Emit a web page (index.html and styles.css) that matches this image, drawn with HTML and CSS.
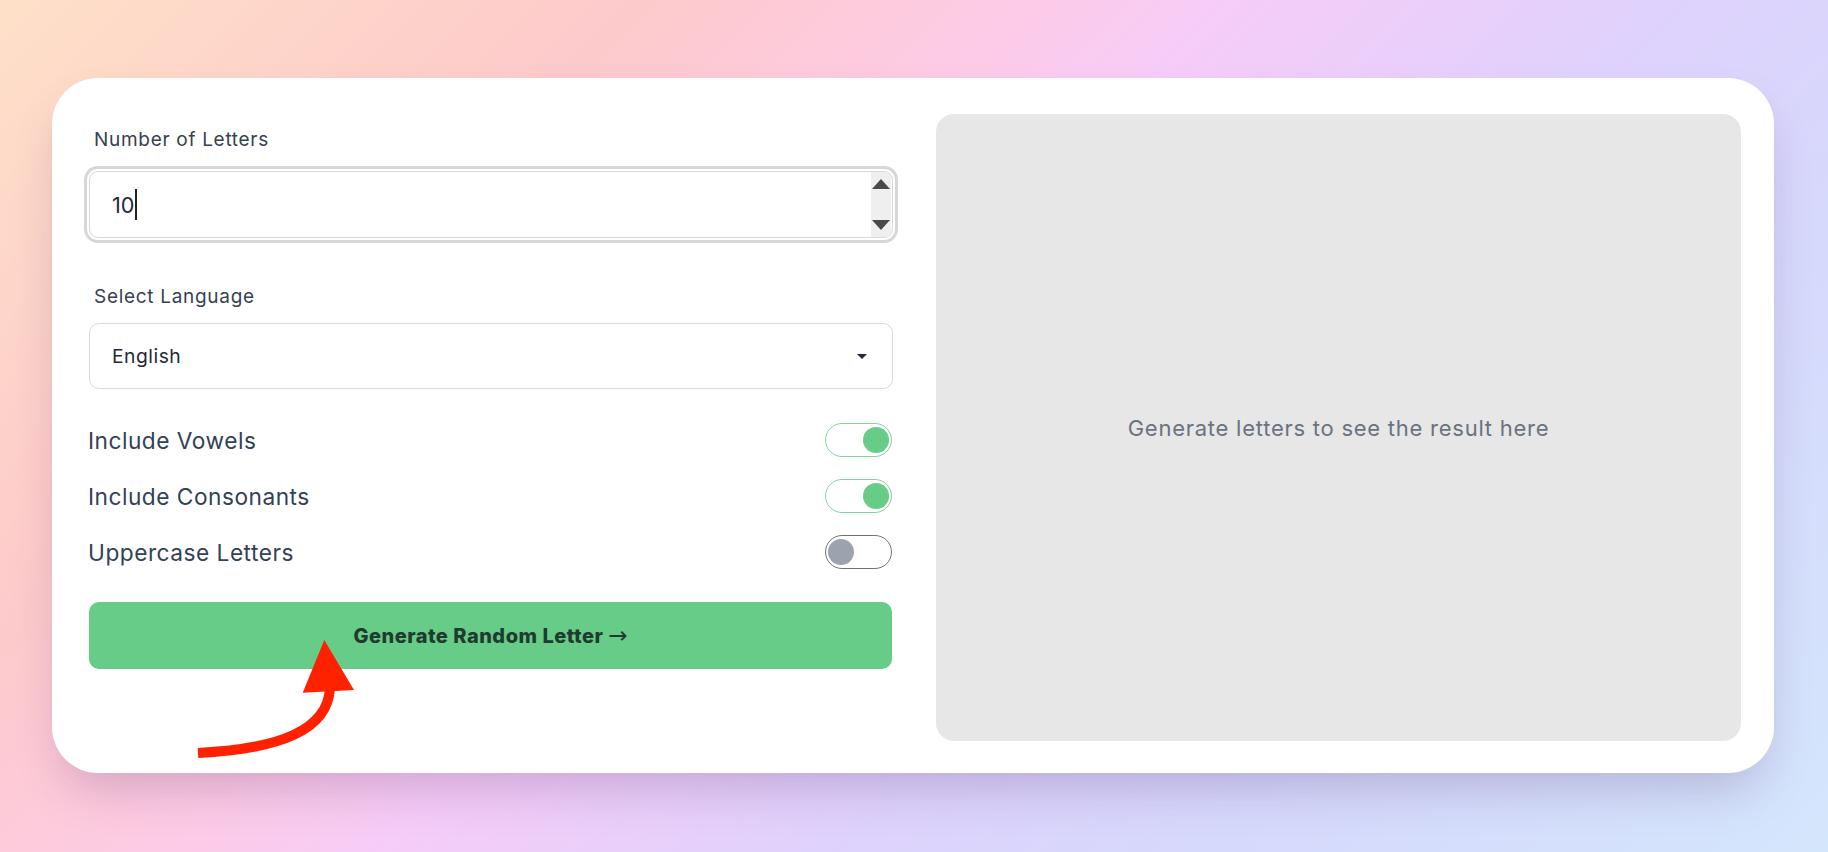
FILE: index.html
```html
<!DOCTYPE html>
<html lang="en">
<head>
<meta charset="utf-8">
<title>Random Letter Generator</title>
<link rel="stylesheet" href="styles.css">
</head>
<body>
<div class="card">
  <div class="controls">
    <div class="field-label first">Number of Letters</div>
    <div class="number-input">
      <span class="value">10</span><span class="caret"></span>
      <div class="spinner"><span class="tri-up"></span><span class="tri-down"></span></div>
    </div>
    <div class="field-label second">Select Language</div>
    <div class="select"><span class="select-value">English</span><span class="select-arrow"></span></div>
    <div class="toggles">
      <div class="toggle-row"><span class="toggle-label">Include Vowels</span><span class="switch on"><span class="knob"></span></span></div>
      <div class="toggle-row"><span class="toggle-label">Include Consonants</span><span class="switch on"><span class="knob"></span></span></div>
      <div class="toggle-row"><span class="toggle-label">Uppercase Letters</span><span class="switch off"><span class="knob"></span></span></div>
    </div>
    <button class="generate">Generate Random Letter <span class="btn-arrow">→</span></button>
  </div>
  <div class="result"><p class="result-text">Generate letters to see the result here</p></div>
</div>
<svg class="annotation" width="1828" height="852" viewBox="0 0 1828 852">
  <path d="M198 753 C 280 749, 328 730, 330 688" fill="none" stroke="#ff2200" stroke-width="10"/>
  <polygon points="324.3,640 302.7,692.7 354,690" fill="#ff2200"/>
</svg>
</body>
</html>
```
FILE: styles.css
```css
html, body {
  margin: 0;
  height: 852px;
}
body {
  box-sizing: border-box;
  padding: 78px 0 0 52px;
  overflow: hidden;
  font-family: Inter, "Noto Sans", sans-serif;
  background: linear-gradient(135deg, #fee0c8 0%, #fdcacb 24%, #fdcbe6 38%, #f6ccf8 46%, #dfd2fc 62%, #d6d8fc 76%, #d4e6fc 100%);
}
.card {
  width: 1722px;
  height: 695px;
  box-sizing: border-box;
  padding: 36px 33px 32px 36px;
  background: #fff;
  border-radius: 46px;
  display: grid;
  grid-template-columns: 805px 805px;
  column-gap: 43px;
  box-shadow: 0 25px 50px -12px rgba(60, 20, 80, 0.22);
}
.controls {
  display: flex;
  flex-direction: column;
  padding-top: 15px;
}
.field-label {
  font-size: 19px;
  line-height: 22px;
  letter-spacing: 0.7px;
  color: #374151;
  padding-left: 6px;
}
.field-label.first { margin-bottom: 20px; }
.field-label.second { margin-bottom: 15px; }
.number-input {
  height: 67px;
  box-sizing: border-box;
  border: 1.5px solid #d9d9d9;
  border-radius: 9px;
  box-shadow: 0 0 0 2px #fff, 0 0 0 5px #d7d7db;
  display: flex;
  align-items: center;
  padding-left: 22px;
  margin: 0 0 48px 1px;
  overflow: hidden;
}
.value {
  font-size: 21.6px;
  color: #1f2937;
}
.caret {
  width: 1.5px;
  height: 31px;
  background: #222;
  margin-left: 1px;
}
.spinner {
  margin-left: auto;
  margin-right: 1px;
  align-self: stretch;
  width: 20px;
  background: #efefef;
  display: flex;
  flex-direction: column;
  justify-content: space-between;
  align-items: center;
  padding: 7px 0 7px;
  box-sizing: border-box;
}
.tri-up {
  width: 0;
  height: 0;
  border-left: 9.5px solid transparent;
  border-right: 9.5px solid transparent;
  border-bottom: 10px solid #4a4a4a;
}
.tri-down {
  width: 0;
  height: 0;
  border-left: 9.5px solid transparent;
  border-right: 9.5px solid transparent;
  border-top: 10px solid #4a4a4a;
}
.select {
  height: 66px;
  box-sizing: border-box;
  border: 1.5px solid #dadada;
  border-radius: 10px;
  padding: 0 25px 0 22px;
  margin-left: 1px;
  display: flex;
  align-items: center;
  justify-content: space-between;
}
.select-value {
  font-size: 19.3px;
  letter-spacing: 0.5px;
  color: #1f2937;
}
.select-arrow {
  width: 0;
  height: 0;
  border-left: 5px solid transparent;
  border-right: 5px solid transparent;
  border-top: 5.5px solid #1f2937;
}
.toggles {
  margin-top: 34px;
  display: flex;
  flex-direction: column;
  gap: 22px;
}
.toggle-row {
  display: flex;
  align-items: center;
  justify-content: space-between;
  height: 34px;
}
.toggle-label {
  font-size: 22.7px;
  letter-spacing: 0.5px;
  color: #334155;
}
.switch {
  width: 67px;
  height: 34px;
  box-sizing: border-box;
  border-radius: 17px;
  display: flex;
  align-items: center;
  padding: 0 2px;
  margin-right: 1px;
}
.knob {
  width: 26px;
  height: 26px;
  border-radius: 50%;
}
.switch.on {
  border: 1.5px solid #7fd69d;
  justify-content: flex-end;
}
.switch.on .knob { background: #66cc88; }
.switch.off {
  border: 1.5px solid #6b7280;
  justify-content: flex-start;
}
.switch.off .knob { background: #9ca3af; }
.generate {
  margin: 33px 1px 0 1px;
  height: 67px;
  border: none;
  border-radius: 10px;
  background: #66cc88;
  font-family: Inter, "Noto Sans", sans-serif;
  font-weight: 800;
  font-size: 20px;
  line-height: 24px;
  letter-spacing: 0.5px;
  color: #1f3b2d;
  padding: 0;
}
.btn-arrow {
  font-family: "DejaVu Sans", sans-serif;
  font-weight: 400;
  font-size: 23px;
  line-height: 1;
  letter-spacing: 0;
}
.result {
  background: #e7e7e7;
  border-radius: 18px;
  display: flex;
  align-items: center;
  justify-content: center;
}
.result-text {
  margin: 0;
  font-size: 22px;
  letter-spacing: 0.75px;
  color: #6b7280;
}
.annotation {
  position: absolute;
  left: 0;
  top: 0;
  pointer-events: none;
}
```
